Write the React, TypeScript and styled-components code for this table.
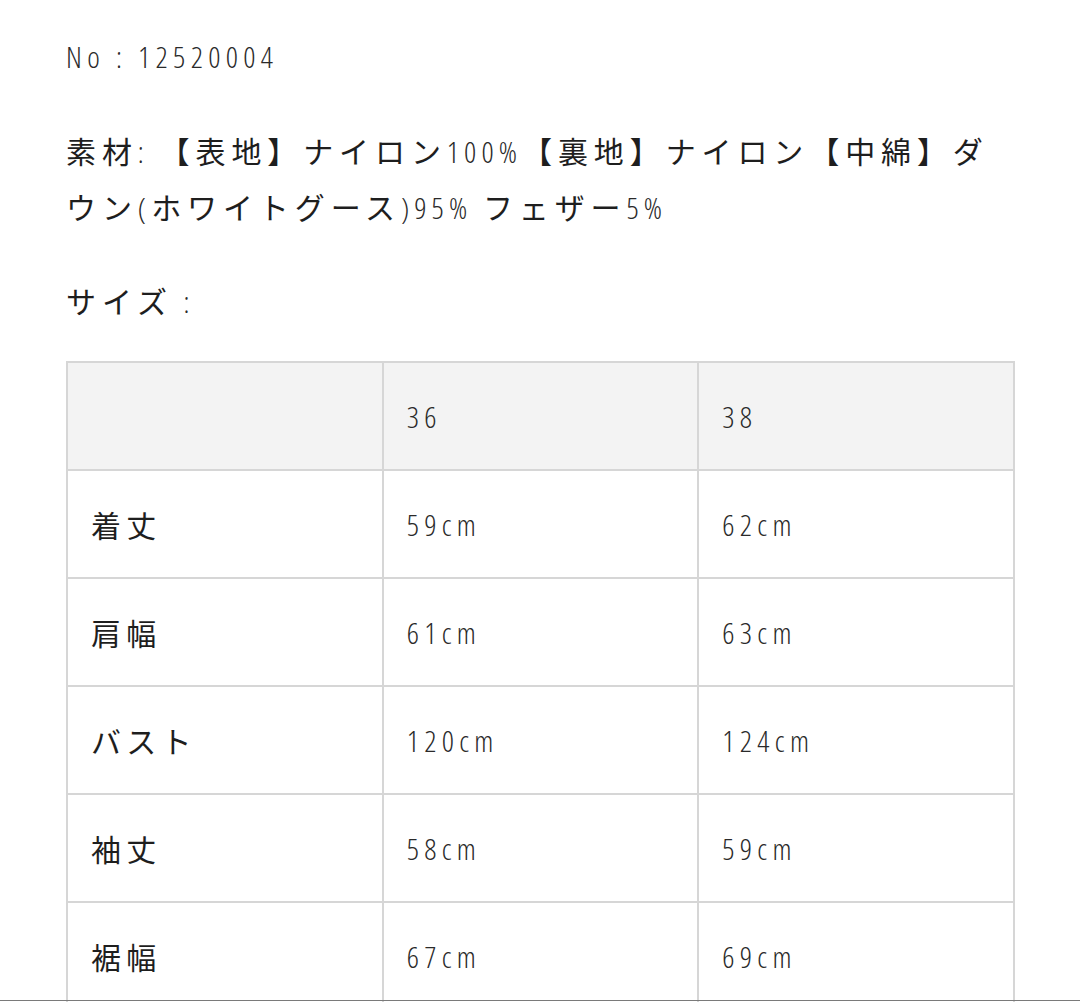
import React from "react";
import styled, { createGlobalStyle } from "styled-components";

const Global = createGlobalStyle`
  html, body { margin: 0; padding: 0; background: #ffffff; }
  body {
    font-family: "Open Sans", "Noto Sans CJK JP", sans-serif;
    font-stretch: 75%;
    font-weight: 400;
    color: #1e1e1e;
  }
`;

const Page = styled.main`
  padding: 37px 0 0 66px;
  width: 949px;
`;

const Latin = styled.span`
  font-weight: 300;
  letter-spacing: 5.1px;
  color: #2a2a2a;
`;

const Line = styled.p`
  margin: 0;
  font-size: 30px;
  line-height: 40px;
  letter-spacing: 5.3px;
  font-weight: 300;
  color: #2a2a2a;
`;

const Paragraph = styled.p<{ $top: number }>`
  margin: ${(p) => p.$top}px 0 0;
  font-size: 30px;
  line-height: 56px;
  letter-spacing: 5.9px;
`;

const Sheet = styled.table`
  margin-top: 31px;
  width: 949px;
  border-collapse: collapse;
  table-layout: fixed;
  border: 2px solid #d6d6d6;
`;

const Cell = styled.td<{ $head?: boolean; $label?: boolean }>`
  height: 106px;
  padding: 0 0 0 23px;
  border: 2px solid #d6d6d6;
  background: ${(p) => (p.$head ? "#f3f3f3" : "#ffffff")};
  font-size: 30px;
  letter-spacing: 5.3px;
  font-weight: ${(p) => (p.$label ? 400 : 300)};
  color: ${(p) => (p.$label ? "#1e1e1e" : "#2a2a2a")};
  vertical-align: middle;
  text-align: left;
`;

const BottomRule = styled.div`
  position: fixed;
  left: 0;
  right: 0;
  bottom: 1px;
  height: 1px;
  background: #7a7a7a;
`;

const rows: [string, string, string][] = [
  ["着丈", "59cm", "62cm"],
  ["肩幅", "61cm", "63cm"],
  ["バスト", "120cm", "124cm"],
  ["袖丈", "58cm", "59cm"],
  ["裾幅", "67cm", "69cm"],
];

export default function App() {
  return (
    <>
      <Global />
      <Page>
        <Line>No : 12520004</Line>
        <Paragraph $top={47}>
          素材<Latin>: </Latin>【表地】ナイロン<Latin>100%</Latin>【裏地】ナイロン【中綿】ダウン<Latin>(</Latin>ホワイトグース<Latin>)95% </Latin>フェザー<Latin>5%</Latin>
        </Paragraph>
        <Paragraph $top={38}>
          サイズ<Latin> :</Latin>
        </Paragraph>
        <Sheet>
          <tbody>
            <tr>
              <Cell $head />
              <Cell $head>36</Cell>
              <Cell $head>38</Cell>
            </tr>
            {rows.map(([label, a, b]) => (
              <tr key={label}>
                <Cell $label>{label}</Cell>
                <Cell>{a}</Cell>
                <Cell>{b}</Cell>
              </tr>
            ))}
          </tbody>
        </Sheet>
      </Page>
      <BottomRule />
    </>
  );
}
